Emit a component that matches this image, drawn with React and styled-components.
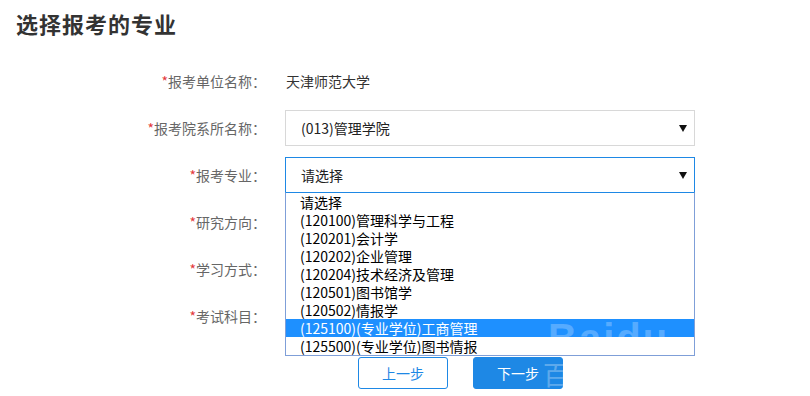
import React from "react";
import styled, { createGlobalStyle } from "styled-components";

const GlobalStyle = createGlobalStyle`
  html, body {
    margin: 0;
    padding: 0;
    background: #fff;
  }
  body {
    font-family: "Noto Sans CJK SC", "Liberation Sans", sans-serif;
  }
`;

const Page = styled.div`
  width: 810px;
  height: 396px;
  position: relative;
  overflow: hidden;
`;

const Title = styled.h2`
  margin: 0;
  padding: 9px 0 0 16px;
  height: 28px;
  font-size: 22px;
  line-height: 28px;
  font-weight: 700;
  color: #333;
  letter-spacing: 1px;
`;

const Form = styled.div`
  display: flex;
  flex-direction: column;
  gap: 11px;
  margin-top: 26px;
`;

const Row = styled.div`
  display: grid;
  grid-template-columns: 266px 410px;
  column-gap: 19px;
  align-items: center;
  height: 36px;
`;

const Label = styled.div`
  text-align: right;
  font-size: 14px;
  color: #666;
`;

const Star = styled.span`
  color: #e4393c;
`;

const Value = styled.div`
  font-size: 14px;
  color: #333;
  padding-left: 1px;
`;

const SelectBox = styled.div`
  position: relative;
  box-sizing: border-box;
  height: 36px;
  display: flex;
  align-items: center;
  padding-left: 15px;
  border: 1px solid ${(p) => (p.active ? "#1e88e5" : "#d8d8d8")};
  font-size: 14px;
  color: #222;
  background: #fff;
  z-index: ${(p) => (p.active ? 5 : 1)};
`;

const Arrow = styled.span`
  position: absolute;
  right: 7px;
  top: 50%;
  width: 0;
  height: 0;
  margin-top: -3px;
  border-left: 4px solid transparent;
  border-right: 4px solid transparent;
  border-top: 7px solid #111;
`;

const Dropdown = styled.ul`
  position: absolute;
  top: 100%;
  left: -1px;
  width: 410px;
  box-sizing: border-box;
  margin: 0;
  padding: 0;
  list-style: none;
  background: #fff;
  border: 1px solid #7f9fd8;
  border-top-color: #1e88e5;
  z-index: 10;
`;

const Option = styled.li`
  height: 18px;
  line-height: 18px;
  padding-left: 14px;
  font-size: 14px;
  color: ${(p) => (p.selected ? "#fff" : "#000")};
  background: ${(p) => (p.selected ? "#1e90ff" : "transparent")};
  white-space: nowrap;
`;

const Buttons = styled.div`
  display: flex;
  gap: 25px;
  padding-left: 358px;
  margin-top: 23px;
`;

const Button = styled.button`
  width: 90px;
  height: 32px;
  box-sizing: border-box;
  border-radius: 3px;
  font-family: "Noto Sans CJK SC", sans-serif;
  font-size: 14px;
  cursor: pointer;
  border: 1px solid #1e88e5;
  color: ${(p) => (p.primary ? "#fff" : "#1e88e5")};
  background: ${(p) => (p.primary ? "#1e88e5" : "#fff")};
`;

const Watermark = styled.div`
  position: absolute;
  left: 548px;
  top: 318px;
  font-family: "Liberation Sans", sans-serif;
  font-size: 40px;
  font-weight: 700;
  letter-spacing: 2px;
  color: rgba(255, 255, 255, 0.25);
  pointer-events: none;
  z-index: 20;
  line-height: 40px;
`;

const WatermarkCn = styled.div`
  position: absolute;
  left: 543px;
  top: 360px;
  font-size: 26px;
  color: rgba(255, 255, 255, 0.3);
  pointer-events: none;
  z-index: 20;
  line-height: 28px;
`;

const options = [
  "请选择",
  "(120100)管理科学与工程",
  "(120201)会计学",
  "(120202)企业管理",
  "(120204)技术经济及管理",
  "(120501)图书馆学",
  "(120502)情报学",
  "(125100)(专业学位)工商管理",
  "(125500)(专业学位)图书情报",
];

const App = () => {
  return (
    <Page>
      <GlobalStyle />
      <Title>选择报考的专业</Title>
      <Form>
        <Row>
          <Label><Star>*</Star>报考单位名称：</Label>
          <Value>天津师范大学</Value>
        </Row>
        <Row>
          <Label><Star>*</Star>报考院系所名称：</Label>
          <SelectBox>
            (013)管理学院
            <Arrow />
          </SelectBox>
        </Row>
        <Row>
          <Label><Star>*</Star>报考专业：</Label>
          <SelectBox active>
            请选择
            <Arrow />
            <Dropdown>
              {options.map((o, i) => (
                <Option key={o} selected={i === 7}>{o}</Option>
              ))}
            </Dropdown>
          </SelectBox>
        </Row>
        <Row>
          <Label><Star>*</Star>研究方向：</Label>
          <div />
        </Row>
        <Row>
          <Label><Star>*</Star>学习方式：</Label>
          <div />
        </Row>
        <Row>
          <Label><Star>*</Star>考试科目：</Label>
          <div />
        </Row>
      </Form>
      <Buttons>
        <Button>上一步</Button>
        <Button primary>下一步</Button>
      </Buttons>
      <Watermark>Baidu</Watermark>
      <WatermarkCn>百</WatermarkCn>
    </Page>
  );
};

export default App;
